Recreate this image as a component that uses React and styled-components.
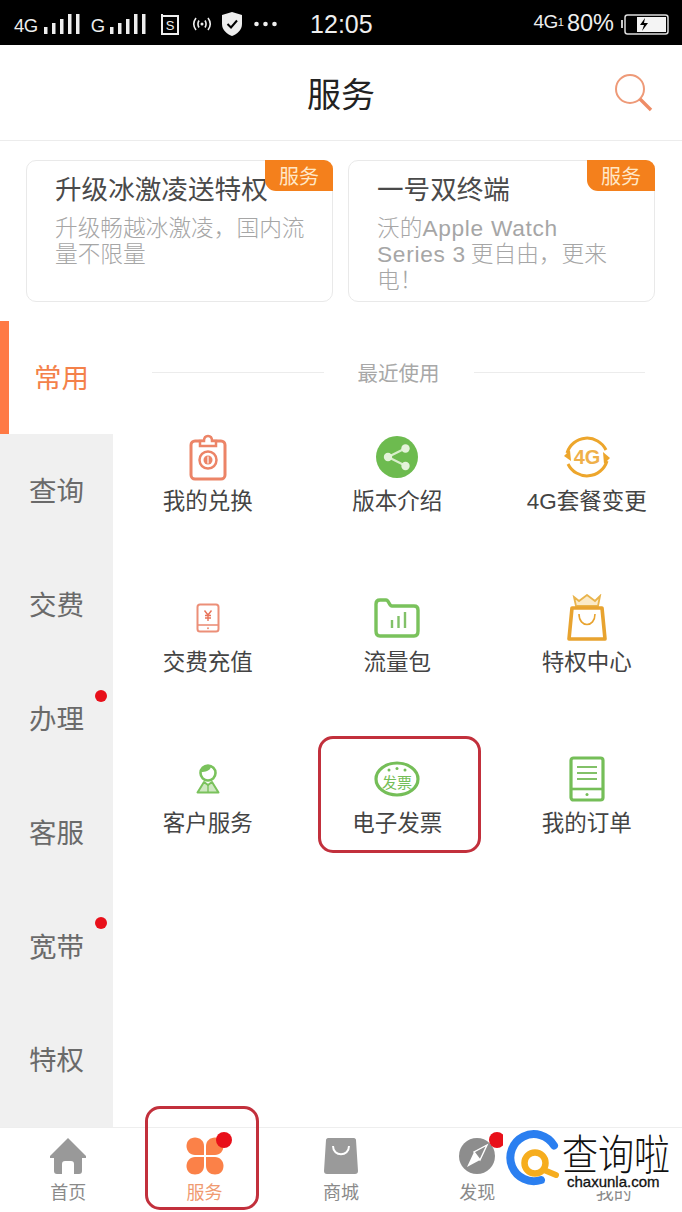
import React from "react";
import styled, { createGlobalStyle } from "styled-components";

const Global = createGlobalStyle`
  html, body { margin: 0; padding: 0; background: #fff; }
  body { font-family: "Noto Sans CJK SC", "Liberation Sans", sans-serif; }
  * { box-sizing: border-box; }
`;

const CJK = `"Liberation Sans", "Noto Sans CJK SC", sans-serif`;

const Page = styled.div`
  position: relative;
  width: 682px;
  height: 1212px;
  overflow: hidden;
  display: flex;
  flex-direction: column;
  background: #fff;
  font-family: ${CJK};
`;

/* status bar */
const StatusBar = styled.div`
  height: 45px;
  flex: none;
  background: #000;
  display: flex;
  align-items: center;
  padding: 3px 13px 0 14px;
  color: #eee;
`;
const StatusText = styled.span`
  font-size: ${(p) => p.$size || 19}px;
  margin-left: ${(p) => p.$ml || 0}px;
  letter-spacing: ${(p) => p.$ls || 0}px;
  line-height: 1;
  white-space: nowrap;
  transform: translateY(${(p) => p.$dy || 0}px);
`;
const StatusIcon = styled.svg`
  flex: none;
  margin-left: ${(p) => p.$ml || 0}px;
  display: block;
`;
const Spacer = styled.div`
  flex: 1;
`;

/* header */
const Header = styled.header`
  position: relative;
  height: 96px;
  flex: none;
  display: flex;
  align-items: center;
  justify-content: center;
  padding-top: 5px;
  border-bottom: 1.5px solid #ececec;
`;
const Title = styled.h1`
  margin: 0;
  font-size: 34px;
  font-weight: 400;
  color: #222;
  line-height: 1;
`;
const SearchBtn = styled.div`
  position: absolute;
  right: 29px;
  top: 29px;
  width: 40px;
  height: 40px;
`;

/* promo cards */
const Promos = styled.section`
  height: 180px;
  flex: none;
  display: flex;
  gap: 15px;
  padding: 19px 27px 0 26px;
`;
const Promo = styled.article`
  position: relative;
  width: 307px;
  height: 142px;
  border: 1.5px solid #e9e9e9;
  border-radius: 10px;
  padding: 12px 24px 0 28px;
`;
const PromoTitle = styled.div`
  font-size: 26.6px;
  line-height: 34px;
  color: #4a4a4a;
  white-space: nowrap;
`;
const PromoDesc = styled.div`
  margin-top: 7px;
  font-size: 22.7px;
  line-height: 26px;
  color: #a6a6a6;
  font-family: "Noto Sans CJK SC", sans-serif;
  font-weight: 300;
`;
const Latin = styled.span`
  font-family: "Liberation Sans", sans-serif;
  font-weight: 400;
  line-height: 1;
  letter-spacing: 0.7px;
`;
const Tag = styled.span`
  position: absolute;
  top: -1px;
  right: -1px;
  width: 68px;
  height: 31px;
  background: #f4801c;
  color: #ffe7c7;
  font-size: 20px;
  line-height: 34px;
  text-align: center;
  border-radius: 0 9px 0 11px;
`;

/* body */
const Main = styled.main`
  flex: 1;
  min-height: 0;
  display: flex;
`;
const Sidebar = styled.nav`
  width: 113px;
  flex: none;
  background: #f0f0f0;
  display: flex;
  flex-direction: column;
`;
const SideItem = styled.div`
  position: relative;
  height: ${(p) => (p.$active ? 113 : 113.8)}px;
  flex: none;
  display: flex;
  align-items: center;
  padding-left: ${(p) => (p.$active ? 25 : 29)}px;
  padding-bottom: 3px;
  font-size: 27.5px;
  color: ${(p) => (p.$active ? "#f4814a" : "#6a6a6a")};
  background: ${(p) => (p.$active ? "#fff" : "transparent")};
  border-left: ${(p) => (p.$active ? "9px solid #ff7a45" : "none")};
`;
const SideDot = styled.i`
  position: absolute;
  right: 6px;
  top: 28px;
  width: 12px;
  height: 12px;
  border-radius: 50%;
  background: #e8101a;
`;
const Content = styled.div`
  flex: 1;
  min-width: 0;
`;
const SectionHead = styled.div`
  height: 102px;
  padding: 0 37px 0 39px;
  display: flex;
  align-items: center;
  gap: 34px;
  font-size: 20.5px;
  color: #a8a8a8;
  white-space: nowrap;
`;
const Rule = styled.span`
  flex: 1;
  height: 1px;
  background: #ececec;
`;
const Grid = styled.div`
  margin-top: 10px;
  display: grid;
  grid-template-columns: repeat(3, 189.5px);
  grid-auto-rows: 161px;
`;
const Cell = styled.div`
  position: relative;
  display: flex;
  flex-direction: column;
  align-items: center;
`;
const IconSlot = styled.div`
  height: 48px;
  width: 60px;
  display: flex;
  align-items: center;
  justify-content: center;
`;
const CellLabel = styled.div`
  margin-top: 6px;
  font-size: 22.5px;
  line-height: 30px;
  color: #444;
  white-space: nowrap;
`;
const Highlight = styled.div`
  position: absolute;
  left: ${(p) => p.$l}px;
  top: ${(p) => p.$t}px;
  width: ${(p) => p.$w}px;
  height: ${(p) => p.$h}px;
  border: 3px solid #c2303c;
  border-radius: 15px;
  pointer-events: none;
`;

/* bottom nav */
const BottomNav = styled.footer`
  position: relative;
  height: 85px;
  flex: none;
  border-top: 1.5px solid #eeeeee;
  display: grid;
  grid-template-columns: repeat(5, 136.4px);
  background: #fff;
`;
const NavItem = styled.div`
  position: relative;
  display: flex;
  flex-direction: column;
  align-items: center;
  padding-top: 7px;
`;
const NavIcon = styled.div`
  position: relative;
  width: 44px;
  height: 42px;
  display: flex;
  align-items: center;
  justify-content: center;
`;
const NavLabel = styled.div`
  margin-top: 4px;
  font-size: 18px;
  line-height: 24px;
  color: ${(p) => (p.$active ? "#f09a70" : "#8a8a8a")};
`;
const NavDot = styled.i`
  position: absolute;
  top: ${(p) => p.$t}px;
  right: ${(p) => p.$r}px;
  width: 16px;
  height: 16px;
  border-radius: 50%;
  background: #e8101a;
`;

/* watermark */
const Watermark = styled.div`
  position: absolute;
  left: 503px;
  top: 1128px;
  width: 179px;
  height: 63px;
  background: #fff;
  display: flex;
  align-items: flex-start;
`;
const WmLogo = styled.svg`
  flex: none;
  display: block;
`;
const WmText = styled.div`
  position: absolute;
  left: 59px;
  top: 0;
  width: 120px;
`;
const WmCn = styled.div`
  font-family: "Noto Sans CJK SC", sans-serif;
  font-size: 36px;
  font-weight: 300;
  line-height: 46px;
  color: #111;
  white-space: nowrap;
  transform: scaleY(1.16);
  transform-origin: center;
`;
const WmEn = styled.div`
  font-size: 15px;
  line-height: 16px;
  margin-left: 5px;
  color: #111;
  white-space: nowrap;
  -webkit-text-stroke: 0.3px #111;
`;

/* icons */
const Bars = ({ ml }) => (
  <StatusIcon $ml={ml} width="37" height="22" viewBox="0 0 37 22" fill="#eee">
    <rect x="0" y="14" width="3.5" height="7" />
    <rect x="8" y="10" width="3.5" height="11" />
    <rect x="16" y="6" width="3.5" height="15" />
    <rect x="24" y="1" width="3.5" height="20" />
    <rect x="32" y="1" width="3.5" height="20" />
  </StatusIcon>
);

const Clip = () => (
  <svg width="40" height="48" viewBox="0 0 40 48" fill="none">
    <rect x="3" y="8" width="34" height="38" rx="4" stroke="#ec8467" strokeWidth="3" />
    <path d="M12 8V13H28V8H24C24 4 22 3 20 3S16 4 16 8Z" fill="#fff" stroke="#ec8467" strokeWidth="2.5" />
    <circle cx="20" cy="27" r="8.5" stroke="#ec8467" strokeWidth="2.5" />
    <circle cx="20" cy="27" r="4.5" fill="#ec8467" />
    <path d="M20 23.5V30.5" stroke="#fff" strokeWidth="1.2" />
  </svg>
);
const Share = () => (
  <svg width="44" height="44" viewBox="0 0 44 44">
    <circle cx="22" cy="22" r="21" fill="#6dbb4f" />
    <path d="M31 13L13 22L31 31" stroke="#d8eecb" strokeWidth="2.2" fill="none" />
    <circle cx="30.5" cy="13.5" r="4.2" fill="#e4f3da" />
    <circle cx="13" cy="22" r="4.2" fill="#e4f3da" />
    <circle cx="30.5" cy="31" r="4.2" fill="#e4f3da" />
  </svg>
);
const FourG = () => (
  <svg width="48" height="48" viewBox="0 0 48 48" fill="none">
    <path d="M4 20A21 21 0 0 1 43 17" stroke="#eda62c" strokeWidth="3" />
    <path d="M44 28A21 21 0 0 1 5 31" stroke="#eda62c" strokeWidth="3" />
    <path d="M1 23L7 17L8 28Z" fill="#eda62c" />
    <path d="M47 25L41 31L40 19Z" fill="#eda62c" />
    <text x="24" y="31" textAnchor="middle" fontSize="20" fontWeight="700" fontFamily="Liberation Sans" fill="#efb04a">4G</text>
  </svg>
);
const Phone = () => (
  <svg width="24" height="30" viewBox="0 0 24 30" fill="none">
    <rect x="1.5" y="1.5" width="21" height="27" rx="2.5" stroke="#ec8f78" strokeWidth="2" />
    <path d="M2 22H22" stroke="#ec8f78" strokeWidth="1.6" />
    <path d="M12 12V18M8.5 7.5L12 12L15.5 7.5M9 12.5H15M9 15H15" stroke="#e8745a" strokeWidth="1.4" />
    <circle cx="12" cy="25.3" r="1" fill="#ec8f78" />
  </svg>
);
const Folder = () => (
  <svg width="46" height="40" viewBox="0 0 46 40" fill="none">
    <path d="M2 6C2 3.5 3.5 2 6 2H12C15 2 15 8 18 8H40C42.5 8 44 9.5 44 12V33C44 36 42.5 38 40 38H6C3.5 38 2 36 2 33Z" stroke="#7ac25c" strokeWidth="3.4" />
    <path d="M18 30V22M24.5 30V18M31 30V14" stroke="#82c168" strokeWidth="2.4" />
  </svg>
);
const CrownBag = () => (
  <svg width="42" height="48" viewBox="0 0 42 48" fill="none">
    <path d="M8 3L13 7L21 1L29 7L34 2L32 12H10Z" stroke="#e9b44c" strokeWidth="1.8" fill="#fbeac8" />
    <path d="M6 14H36L39 45H3Z" stroke="#e8a32f" strokeWidth="3.6" strokeLinejoin="round" />
    <path d="M13 20C13 34 29 34 29 20" stroke="#e8a32f" strokeWidth="1.6" />
  </svg>
);
const Agent = () => (
  <svg width="24" height="30" viewBox="0 0 24 30" fill="none">
    <circle cx="12" cy="9" r="7.5" stroke="#7ac25c" strokeWidth="2.6" />
    <path d="M5 8C9 8 14 7 15 3L19 7L15 2H8Z" fill="#7ac25c" />
    <path d="M8 18L1.5 28.5H22.5L16 18L12 21Z" stroke="#7ac25c" strokeWidth="2" fill="#cfe8c2" strokeLinejoin="round" />
    <path d="M12 21V28" stroke="#7ac25c" strokeWidth="1.4" />
  </svg>
);
const Invoice = () => (
  <svg width="46" height="36" viewBox="0 0 46 36" fill="none">
    <ellipse cx="23" cy="18" rx="21" ry="16" stroke="#75be58" strokeWidth="3.2" />
    <circle cx="15" cy="9" r="1.5" fill="#75be58" />
    <circle cx="23" cy="7.5" r="1.5" fill="#75be58" />
    <circle cx="31" cy="9" r="1.5" fill="#75be58" />
    <text x="23" y="27" textAnchor="middle" fontSize="15" fontFamily="Noto Sans CJK SC" fill="#75be58">发票</text>
  </svg>
);
const Tablet = () => (
  <svg width="36" height="46" viewBox="0 0 36 46" fill="none">
    <rect x="2" y="2" width="32" height="42" rx="2.5" stroke="#75be58" strokeWidth="3.2" />
    <path d="M2 33H34" stroke="#75be58" strokeWidth="2.6" />
    <path d="M8 11H28M8 17H28M8 23H28" stroke="#82c168" strokeWidth="2" />
    <circle cx="18" cy="38.5" r="1.5" fill="#75be58" />
  </svg>
);

const Home = () => (
  <svg width="38" height="38" viewBox="0 0 38 38">
    <path d="M19 1L37 19V21H33V34C33 36 32 37 30 37H25V27C25 25 24 24 22 24H16C14 24 13 25 13 27V37H8C6 37 5 36 5 34V21H1V19Z" fill="#999" />
  </svg>
);
const Clover = () => (
  <svg width="38" height="38" viewBox="0 0 38 38" fill="#fb8148">
    <path d="M18 18V9C18 4 14 0.5 9 0.5C4 0.5 0.5 4 0.5 9C0.5 14 4 18 9 18Z" />
    <path d="M20 18V9C20 4 24 0.5 29 0.5C34 0.5 37.5 4 37.5 9C37.5 14 34 18 29 18Z" />
    <path d="M18 20V29C18 34 14 37.5 9 37.5C4 37.5 0.5 34 0.5 29C0.5 24 4 20 9 20Z" />
    <path d="M20 20V29C20 34 24 37.5 29 37.5C34 37.5 37.5 34 37.5 29C37.5 24 34 20 29 20Z" />
  </svg>
);
const Bag = () => (
  <svg width="34" height="38" viewBox="0 0 34 38">
    <path d="M4 1H30C31 1 32 2 32 3L34 34C34 36 33 37 31 37H3C1 37 0 36 0 34L2 3C2 2 3 1 4 1Z" fill="#9a9a9a" />
    <path d="M9 9C9 20 25 20 25 9" stroke="#fff" strokeWidth="2" fill="none" />
  </svg>
);
const Compass = () => (
  <svg width="36" height="36" viewBox="0 0 36 36">
    <circle cx="18" cy="18" r="18" fill="#8d8d8d" />
    <path d="M28 7L21 22L8 29L15 14Z" fill="#fff" />
    <path d="M21 22L15 14L28 7Z" fill="#8d8d8d" stroke="#fff" strokeWidth="1.4" />
  </svg>
);

const items = [
  ["我的兑换", <Clip />],
  ["版本介绍", <Share />],
  ["4G套餐变更", <FourG />],
  ["交费充值", <Phone />],
  ["流量包", <Folder />],
  ["特权中心", <CrownBag />],
  ["客户服务", <Agent />],
  ["电子发票", <Invoice />, true],
  ["我的订单", <Tablet />],
];

const side = [
  ["查询"],
  ["交费"],
  ["办理", true],
  ["客服"],
  ["宽带", true],
  ["特权"],
];

const navs = [
  ["首页", <Home />],
  ["服务", <Clover />, true],
  ["商城", <Bag />],
  ["发现", <Compass />],
  ["我的", null],
];

export default function App() {
  return (
    <Page>
      <Global />
      <StatusBar>
        <StatusText $size={18.5} $ls={-0.5} $dy={2}>4G</StatusText>
        <Bars ml={6} />
        <StatusText $size={18.5} $ml={10} $dy={2}>G</StatusText>
        <Bars ml={5} />
        <StatusIcon $ml={13} width="20" height="22" viewBox="0 0 20 22" fill="none" stroke="#eee">
          <path d="M3 3H18V21H2V1" strokeWidth="2" />
          <text x="10" y="17" textAnchor="middle" fontSize="13" fontFamily="Liberation Sans" fill="#eee" stroke="none">S</text>
        </StatusIcon>
        <StatusIcon $ml={11} width="22" height="16" viewBox="0 0 22 16" fill="none" stroke="#eee" strokeWidth="1.6">
          <path d="M5 2C2 6 2 10 5 14M17 2C20 6 20 10 17 14M8 4.5C6.5 7 6.5 9 8 11.5M14 4.5C15.5 7 15.5 9 14 11.5" />
          <circle cx="11" cy="8" r="1.5" fill="#eee" stroke="none" />
        </StatusIcon>
        <StatusIcon $ml={9} width="20" height="24" viewBox="0 0 20 24" fill="#eee">
          <path d="M10 0L20 3V12C20 18 15 22 10 24C5 22 0 18 0 12V3Z" />
          <path d="M5.5 12L9 15.5L15 8.5" stroke="#000" strokeWidth="2" fill="none" />
        </StatusIcon>
        <StatusIcon $ml={12} width="23" height="6" viewBox="0 0 23 6" fill="#eee">
          <circle cx="2.5" cy="3" r="2.3" />
          <circle cx="11.5" cy="3" r="2.3" />
          <circle cx="20.5" cy="3" r="2.3" />
        </StatusIcon>
        <StatusText $size={25} $ml={33}>12:05</StatusText>
        <Spacer />
        <StatusText $size={19} $ls={-0.5} $dy={-3}>4G</StatusText>
        <StatusText $size={11} $dy={-2}>1</StatusText>
        <StatusText $size={23.5} $ml={3}>80%</StatusText>
        <StatusIcon $ml={5} width="50" height="26" viewBox="0 0 50 26" fill="none">
          <path d="M3 9V17" stroke="#ccc" strokeWidth="2" />
          <rect x="6" y="4" width="43" height="19" rx="2.5" stroke="#ddd" strokeWidth="1.5" />
          <rect x="18" y="6" width="29" height="15" fill="#f4f4f4" />
          <path d="M26 7L21 14H25L23 20L29 12H25Z" fill="#000" />
        </StatusIcon>
      </StatusBar>

      <Header>
        <Title>服务</Title>
        <SearchBtn>
          <svg width="40" height="40" viewBox="0 0 40 40" fill="none">
            <circle cx="17" cy="15" r="14" stroke="#ee9a78" strokeWidth="2" />
            <path d="M27 25L38 36" stroke="#ee8c66" strokeWidth="3.4" />
          </svg>
        </SearchBtn>
      </Header>

      <Promos>
        <Promo>
          <PromoTitle>升级冰激凌送特权</PromoTitle>
          <PromoDesc>{"升级畅越冰激凌\uFF0C国内流量不限量"}</PromoDesc>
          <Tag>服务</Tag>
        </Promo>
        <Promo>
          <PromoTitle>一号双终端</PromoTitle>
          <PromoDesc>
            沃的<Latin>Apple Watch</Latin>
            <br />
            <Latin>Series 3</Latin>{" 更自由\uFF0C更来"}
            <br />
            {"电\uFF01"}
          </PromoDesc>
          <Tag>服务</Tag>
        </Promo>
      </Promos>

      <Main>
        <Sidebar>
          <SideItem $active>常用</SideItem>
          {side.map(([t, dot]) => (
            <SideItem key={t}>
              {t}
              {dot && <SideDot />}
            </SideItem>
          ))}
        </Sidebar>
        <Content>
          <SectionHead>
            <Rule />
            最近使用
            <Rule />
          </SectionHead>
          <Grid>
            {items.map(([t, icon, hl]) => (
              <Cell key={t}>
                <IconSlot>{icon}</IconSlot>
                <CellLabel>{t}</CellLabel>
                {hl && <Highlight $l={15} $t={-19} $w={163} $h={117} />}
              </Cell>
            ))}
          </Grid>
        </Content>
      </Main>

      <BottomNav>
        {navs.map(([t, icon, active]) => (
          <NavItem key={t}>
            <NavIcon>
              {icon}
              {t === "服务" && <NavDot $t={-3} $r={-5} />}
              {t === "发现" && <NavDot $t={-3} $r={-6} />}
            </NavIcon>
            <NavLabel $active={active}>{t}</NavLabel>
            {active && <Highlight $l={9} $t={-22} $w={114} $h={104} />}
          </NavItem>
        ))}
      </BottomNav>

      <Watermark>
        <WmLogo width="60" height="60" viewBox="0 0 60 60" fill="none">
          <path d="M51 17.5A23.5 23.5 0 1 0 38 52" stroke="#2b7ff0" strokeWidth="8" strokeLinecap="round" />
          <circle cx="32" cy="35" r="10.5" stroke="#f6ad1e" strokeWidth="6.5" />
          <path d="M41 42L53 47" stroke="#f6ad1e" strokeWidth="6" strokeLinecap="round" />
        </WmLogo>
        <WmText>
          <WmCn>查询啦</WmCn>
          <WmEn>chaxunla.com</WmEn>
        </WmText>
      </Watermark>
    </Page>
  );
}
